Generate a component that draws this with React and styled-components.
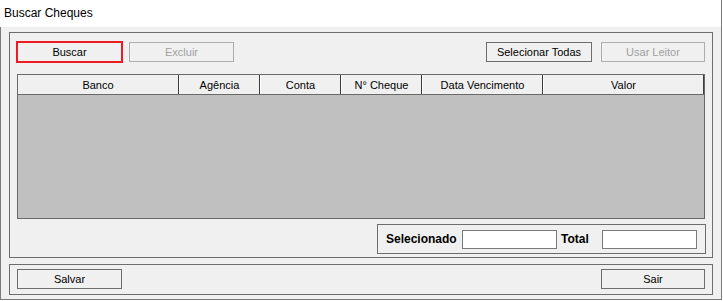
import React from "react";
import styled, { createGlobalStyle } from "styled-components";

const GlobalStyle = createGlobalStyle`
  html, body {
    margin: 0;
    padding: 0;
    background: #fff;
  }
  body {
    font-family: "Liberation Sans", Arial, sans-serif;
    color: #000;
  }
`;

const Window = styled.div`
  width: 722px;
  height: 300px;
  display: flex;
  flex-direction: column;
  box-sizing: border-box;
`;

const TitleBar = styled.div`
  height: 27px;
  box-sizing: border-box;
  background: #fff;
  border-right: 1px solid #7a7a7a;
  padding: 6px 0 0 4px;
  font-size: 12px;
  line-height: 14px;
`;

const WindowBody = styled.div`
  flex: 1;
  box-sizing: border-box;
  background: #f0f0f0;
  border: 1px solid #7a7a7a;
  border-top: 0;
  padding: 5px 8px 4px 8px;
  display: flex;
  flex-direction: column;
  gap: 6px;
`;

const GroupBox = styled.div`
  box-sizing: border-box;
  height: ${(p) => p.$height}px;
  border: 1px solid #6d6d6d;
  padding: ${(p) => p.$padding};
  display: flex;
  flex-direction: column;
`;

const ButtonRow = styled.div`
  display: flex;
  justify-content: space-between;
  align-items: center;
`;

const ButtonGroup = styled.div`
  display: flex;
  gap: ${(p) => p.$gap}px;
`;

const Button = styled.button`
  box-sizing: border-box;
  width: ${(p) => p.$width || 105}px;
  height: 20px;
  padding: 0;
  margin: 0;
  background: #f0f0f0;
  font-family: "Liberation Sans", Arial, sans-serif;
  font-size: 11px;
  color: ${(p) => (p.disabled ? "#a0a0a0" : "#000")};
  border: 1px solid ${(p) => (p.disabled ? "#adadad" : "#6d6d6d")};
  border-radius: 0;
  cursor: default;

  &.focused {
    border: 1px solid #ed1c24;
    box-shadow: 0 0 0 1px #ed1c24;
  }
`;

const Grid = styled.div`
  margin-top: 12px;
  height: 145px;
  box-sizing: border-box;
  border: 1px solid #696969;
  background: #c0c0c0;
  display: flex;
  flex-direction: column;
`;

const HeaderRow = styled.div`
  display: grid;
  grid-template-columns: 161px 81px 81px 81px 121px 1fr;
  height: 19px;
  border-bottom: 1px solid #696969;
  background: #f0f0f0;
`;

const HeaderCell = styled.div`
  box-sizing: border-box;
  border-right: 1px solid #3c3c3c;
  border-left: 1px solid #fff;
  font-size: 11px;
  display: flex;
  align-items: center;
  justify-content: center;

  &:first-child {
    border-left: 0;
  }
`;

const TotalsBox = styled.div`
  align-self: flex-end;
  margin-top: 5px;
  margin-right: -1px;
  width: 329px;
  height: 30px;
  box-sizing: border-box;
  border: 1px solid #6d6d6d;
  padding: 0 8px;
  display: grid;
  grid-template-columns: 76px 95px 45px 95px;
  align-items: center;
`;

const TotalLabel = styled.span`
  font-size: 12px;
  font-weight: bold;
  padding-left: ${(p) => p.$indent || 0}px;
`;

const TotalInput = styled.input`
  box-sizing: border-box;
  width: 95px;
  height: 19px;
  margin: 0;
  border: 1px solid #7a7a7a;
  background: #fff;
  font-family: "Liberation Sans", Arial, sans-serif;
  font-size: 11px;
  padding: 0 3px;
  outline: none;
`;

const columns = ["Banco", "Agência", "Conta", "N° Cheque", "Data Vencimento", "Valor"];

function App() {
  return (
    <>
      <GlobalStyle />
      <Window>
        <TitleBar>Buscar Cheques</TitleBar>
        <WindowBody>
          <GroupBox $height={226} $padding="9px 7px 3px 7px">
            <ButtonRow>
              <ButtonGroup $gap={7}>
                <Button className="focused">Buscar</Button>
                <Button disabled>Excluir</Button>
              </ButtonGroup>
              <ButtonGroup $gap={9}>
                <Button $width={106}>Selecionar Todas</Button>
                <Button disabled $width={104}>Usar Leitor</Button>
              </ButtonGroup>
            </ButtonRow>
            <Grid>
              <HeaderRow>
                {columns.map((c) => (
                  <HeaderCell key={c}>{c}</HeaderCell>
                ))}
              </HeaderRow>
            </Grid>
            <TotalsBox>
              <TotalLabel>Selecionado</TotalLabel>
              <TotalInput />
              <TotalLabel $indent={4}>Total</TotalLabel>
              <TotalInput />
            </TotalsBox>
          </GroupBox>
          <GroupBox $height={31} $padding="4px 7px 5px 7px">
            <ButtonRow>
              <Button>Salvar</Button>
              <Button $width={104}>Sair</Button>
            </ButtonRow>
          </GroupBox>
        </WindowBody>
      </Window>
    </>
  );
}

export default App;
